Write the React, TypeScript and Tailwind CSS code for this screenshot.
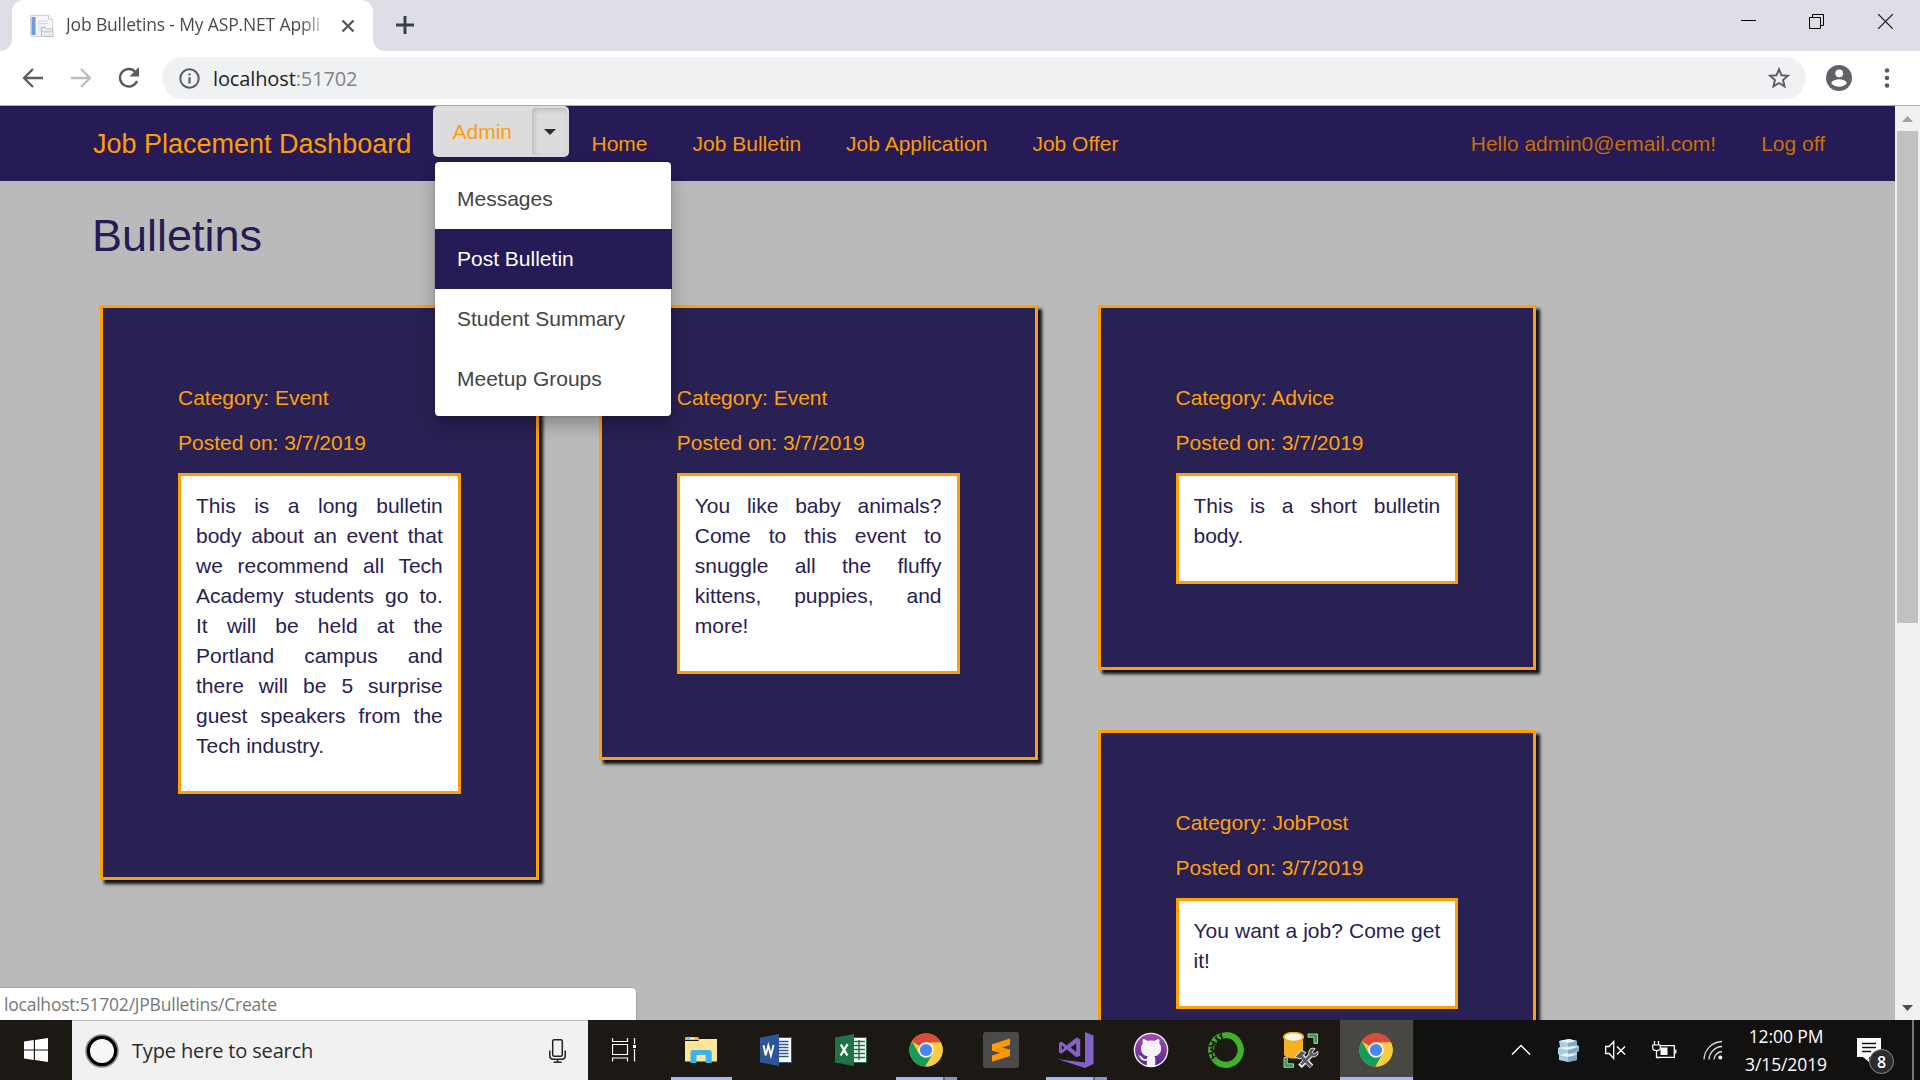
import type { ReactNode } from "react";

const UI = "font-['Open_Sans',sans-serif]";

function Favicon() {
  return (
    <svg width="24" height="24" viewBox="0 0 24 24">
      <path d="M0.5 1.5h18l4 4v17h-22z" fill="#f4f5f8" stroke="#cfd2da" />
      <path d="M18.5 1.5l4 4h-4z" fill="#fff" stroke="#c4c6cc" strokeWidth="0.8" />
      <rect x="1.5" y="3" width="4" height="18" fill="#6d9be3" />
      <path d="M8 7h10M8 9.5h10M8 12h3M8 14.5h3M8 17h3" stroke="#d3d7e2" />
      <path d="M11.5 22.5v-9h4l1 1.500h6.500v7.500z" fill="#eceef2" stroke="#b9bcc5" />
      <path d="M12 17.500h11" stroke="#cdd0d8" />
      <rect x="14.500" y="18.500" width="5" height="2" fill="#fff" stroke="#c3c6ce" strokeWidth="0.600" />
    </svg>
  );
}

function ChromeLogo() {
  return (
    <svg width="34" height="34" viewBox="0 0 34 34">
      <circle cx="17" cy="17" r="16.600" fill="#fcc934" />
      <path d="M17 17L2.900 8.200A16.600 16.600 0 0 1 32 9.500H17z" fill="#db4a3e" />
      <path d="M2.900 8.200A16.600 16.600 0 0 0 16.500 33.600L23.500 21 17 17 9.800 20.500z" fill="#149d59" />
      <path d="M32 9.500A16.600 16.600 0 0 1 16.500 33.600L23.600 21 23 9.500z" fill="#fccd43" />
      <circle cx="17" cy="17" r="7.700" fill="#f3f3f3" />
      <circle cx="17" cy="17" r="6.100" fill="#4a86f0" />
    </svg>
  );
}

function ExplorerLogo() {
  return (
    <svg width="32" height="28" viewBox="0 0 32 28">
      <path d="M0 2q0-1 1-1h12l2 3h-15z" fill="#f7b916" />
      <path d="M0 5h13l2-2h17v22.500h-32z" fill="#ffe696" />
      <path d="M2.500 2.500h7" stroke="#fff3c4" strokeWidth="1.200" />
      <path d="M2.500 2.500h2" stroke="#2d9fd8" strokeWidth="1.200" />
      <path d="M5.500 27v-10.500q0-2.500 2.500-2.500h16.500q2.200 0 2.200 2.500v10.500h-6v-8h-9.200v8z" fill="#3db4e7" />
    </svg>
  );
}

function WordLogo() {
  return (
    <svg width="32" height="32" viewBox="0 0 32 32">
      <rect x="18" y="3.500" width="13.500" height="25" fill="#fff" stroke="#2b579a" />
      <path d="M19 7.500h9.500M19 10.500h9.500M19 13.500h9.500M19 16.500h9.500M19 19.500h9.500M19 22.500h9.500" stroke="#2b579a" strokeWidth="1.500" />
      <path d="M0 3.500L19 0v32L0 28.500z" fill="#2b579a" />
      <path d="M3.500 11.200l2.200 10 2.600-9.800 2.600 10 2.700-10.400" fill="none" stroke="#fff" strokeWidth="1.900" />
    </svg>
  );
}

function ExcelLogo() {
  return (
    <svg width="32" height="32" viewBox="0 0 32 32">
      <rect x="18" y="3.500" width="13.500" height="25" fill="#fff" stroke="#217346" />
      <path d="M19 7.500h11M19 11.500h11M19 15.500h11M19 19.500h11M19 23.500h11M24 6v20" stroke="#217346" strokeWidth="1.500" />
      <path d="M0 3.500L19 0v32L0 28.500z" fill="#217346" />
      <path d="M5.800 10.500l6.600 11M12.600 10.200l-7 11.300" fill="none" stroke="#fff" strokeWidth="2.300" />
    </svg>
  );
}

function SublimeLogo() {
  return (
    <svg width="36" height="36" viewBox="0 0 36 36">
      <rect width="36" height="36" rx="2.500" fill="#4a4a4a" />
      <path d="M27 6.500L9 12.200v6.300l18-5.600z" fill="#ff9800" />
      <path d="M9 12.200v6.300l18 5.500v-6.300z" fill="#ffa10a" />
      <path d="M9 18.500l9 2.800 9-3.600-9-2.700z" fill="#e08400" opacity="0.500" />
      <path d="M27 17.700v6.200L9 29.800v-6.300z" fill="#ff9800" />
    </svg>
  );
}

function VisualStudioLogo() {
  return (
    <svg width="36" height="36" viewBox="0 0 36 36">
      <path d="M27 0l8.500 3.500v28.500L27 36 0 27.200l27 3.300z" fill="#8661c5" />
      <path d="M1 11l2.500-1.400 5 4L18.500 5.500l3.700 1.800v16.500l-3.700 1.500-9.800-7.700-5.200 4.200L1 20.500zM3.800 13.200v5l2.500-2.500zM18.200 11.600l-5.500 4 5.500 4.200z" fill="#8661c5" fillRule="evenodd" />
    </svg>
  );
}

function GitHubLogo() {
  return (
    <svg width="36" height="36" viewBox="0 0 36 36">
      <defs>
        <linearGradient id="gh" x1="0" y1="0" x2="0" y2="1">
          <stop offset="0" stopColor="#a84bb8" />
          <stop offset="1" stopColor="#4d2a86" />
        </linearGradient>
      </defs>
      <circle cx="18" cy="18" r="16.600" fill="url(#gh)" stroke="#f2eef5" strokeWidth="1.400" />
      <path d="M13.800 34v-5.500c-4 .8-6-1-7-3-.4-.8-.9-1.200-1.600-1.700 2-.7 3.300.4 4.400 2 1 1.400 2.400 1.500 4.200.9.100-1 .6-1.900 1.200-2.400-4.500-.7-7-3-7-8 0-2 .7-3.500 1.800-4.700-.4-1.600-.3-3.300.3-4.600 1.700 0 3.300 1 4.500 2 2.200-.6 4.700-.6 6.900 0 1.200-1 2.800-2 4.500-2 .6 1.300.7 3 .3 4.600 1.100 1.200 1.800 2.700 1.800 4.700 0 5-2.500 7.300-7 8 .8.700 1.200 1.800 1.200 3.200V34z" fill="#f5f3f7" />
    </svg>
  );
}

function AnacondaLogo() {
  return (
    <svg width="36" height="36" viewBox="0 0 36 36">
      <path d="M18 3.200A14.800 14.800 0 1 1 7 28" fill="none" stroke="#43b02a" strokeWidth="6.200" />
      <path d="M7 28A14.800 14.800 0 0 1 18 3.200" fill="none" stroke="#43b02a" strokeWidth="6" />
      <path
        d="M1 14l6-1M3 9l6 3M8 4l2 6M13 1l1 6M2 17l6 3M0 22l8-3M3 27l6-4M5 12l-1 7M4 20l1 7M7 6l5 2M11 3l4 3M6 9l-2 5"
        fill="none"
        stroke="#1b1815"
        strokeWidth="1.500"
      />
    </svg>
  );
}

function DatabaseToolLogo() {
  return (
    <svg width="36" height="36" viewBox="0 0 36 36">
      <path d="M1 4.500v17.500c0 6 19 6 19 0V4.500z" fill="#f4b223" />
      <ellipse cx="10.500" cy="5" rx="9.800" ry="4.500" fill="#f3f3f1" stroke="#f0a81c" strokeWidth="1.600" />
      <path d="M25 2h9.500v9.500h-3.500V5.200H25zM1 25.500h3.300v6.300h6.200v3.500H1z" fill="#3d9344" stroke="#b9dbb9" strokeWidth="0.900" />
      <path d="M17 34.500l10.500-11M15.500 20.500l13 14" stroke="#e8e8e8" strokeWidth="5" />
      <path d="M12 25l6-6.500 5 2-6 6.500z" fill="#555b60" stroke="#e8e8e8" strokeWidth="1" />
      <path d="M28 16.500a5 5 0 0 1 4.200.3l-3 3.200 2 2 3.500-2.800c1.200 4-2.500 6.800-5.700 5.300L19 34l-2.500-2.200 9.500-9.300c-.8-2.500.3-5 2-6z" fill="#555b60" stroke="#e8e8e8" strokeWidth="1" />
      <path d="M17 23l11 11.500" stroke="#555b60" strokeWidth="3" />
    </svg>
  );
}

type Marker = "none" | "full" | "multi";

function TaskSlot({ children, marker = "none", active = false }: { children: ReactNode; marker?: Marker; active?: boolean }) {
  return (
    <div className={"mx-px flex h-full w-[73px] flex-col items-center " + (active ? "bg-[#484744]" : "")}>
      <div className="flex h-[57px] w-full items-center justify-center pt-[3px] pr-px">{children}</div>
      {marker === "full" && <div className={"h-[3px] bg-[#a9b8f4] " + (active ? "w-full" : "w-[61px]")} />}
      {marker === "multi" && (
        <div className="flex h-[3px] w-[61px]">
          <div className="w-[47px] bg-[#a9b8f4]" />
          <div className="w-[2px] bg-[#5d6584]" />
          <div className="flex-1 bg-[#8794c4]" />
        </div>
      )}
    </div>
  );
}

function BrowserChrome() {
  return (
    <header className={UI}>
      <div className="flex h-[51px] bg-[#dedee6]">
        <div className="flex w-3 bg-white">
          <div className="w-full rounded-br-[12px] bg-[#dedee6]" />
        </div>
        <div className="bg-[#dedee6]">
          <div className="flex h-[51px] w-[361px] items-center rounded-t-[12px] bg-white pl-[18px]">
            <Favicon />
            <div className="ml-3 w-[266px] bg-linear-to-r from-[#45474b] from-88% to-transparent bg-clip-text pb-[2px] text-[17.500px] tracking-[-0.150px] whitespace-nowrap text-transparent">
              Job Bulletins - My ASP.NET Appli
            </div>
            <svg className="ml-[9px]" width="14" height="14" viewBox="0 0 14 14">
              <path d="M1.500 1.500l11 11M12.500 1.500l-11 11" stroke="#55585d" strokeWidth="2.300" />
            </svg>
          </div>
        </div>
        <div className="flex w-3 bg-white">
          <div className="w-full rounded-bl-[12px] bg-[#dedee6]" />
        </div>
        <svg className="mt-4 ml-[11px]" width="18" height="18" viewBox="0 0 18 18">
          <path d="M9 0v18M0 9h18" stroke="#3c4043" strokeWidth="3" />
        </svg>
        <div className="ml-auto flex pt-[14px] pr-[27px]">
          <svg width="15" height="15" viewBox="0 0 15 15">
            <path d="M0 6.500h15" stroke="#000" />
          </svg>
          <svg className="ml-[53px]" width="15" height="15" viewBox="0 0 15 15">
            <path d="M0.500 3.500h11v11h-11zM3.500 3.500v-3h11v11h-3" fill="none" stroke="#000" />
          </svg>
          <svg className="ml-[54px]" width="15" height="15" viewBox="0 0 15 15">
            <path d="M0 0l15 15M15 0L0 15" stroke="#111" strokeWidth="1.200" />
          </svg>
        </div>
      </div>
      <div className="flex h-[54px] items-center bg-white pl-[22px]">
        <svg width="22" height="20" viewBox="0 0 22 20">
          <path d="M21 10H3M11 1L2 10l9 9" fill="none" stroke="#5a5d62" strokeWidth="2.300" />
        </svg>
        <svg className="ml-[26px]" width="22" height="20" viewBox="0 0 22 20">
          <path d="M1 10h18M11 1l9 9-9 9" fill="none" stroke="#babcbe" strokeWidth="2.300" />
        </svg>
        <svg className="ml-[25px]" width="24" height="22" viewBox="0 0 24 22">
          <path d="M18.500 5A8.800 8.800 0 1 0 20 14" fill="none" stroke="#5a5d62" strokeWidth="2.400" />
          <path d="M22 0v9.500h-9.500z" fill="#5a5d62" />
        </svg>
        <div className="ml-[21px] flex h-[42px] w-[1644px] items-center rounded-full bg-[#f0f1f3] pl-[17px]">
          <svg width="21" height="21" viewBox="0 0 21 21">
            <circle cx="10.500" cy="10.500" r="9.200" fill="none" stroke="#5a5d62" strokeWidth="2" />
            <path d="M10.500 9.300v6.200M10.500 5.500v2" stroke="#5a5d62" strokeWidth="2.200" />
          </svg>
          <div className="ml-[13px] pt-[2px] text-[20px] tracking-[-0.120px] text-[#808489]">
            <span className="text-[#1c1e22]">localhost</span>:51702
          </div>
          <svg className="mr-4 ml-auto" width="22" height="22" viewBox="0 0 22 22">
            <path d="M11 2.300l2.500 6 6.500.5-5 4.200 1.600 6.400L11 16l-5.600 3.400L7 13 2 8.800l6.500-.5z" fill="none" stroke="#5a5d62" strokeWidth="1.900" />
          </svg>
        </div>
        <svg className="ml-5" width="26" height="26" viewBox="0 0 26 26">
          <circle cx="13" cy="13" r="13" fill="#5f6269" />
          <circle cx="13.200" cy="8.300" r="3.900" fill="#fff" />
          <path d="M5.200 18c2.500-5 13.200-5 15.700 0-3.500 5-12.200 5-15.700 0z" fill="#fff" />
        </svg>
        <svg className="ml-[32px]" width="6" height="20" viewBox="0 0 6 20">
          <circle cx="3" cy="2.500" r="2.300" fill="#5a5d62" />
          <circle cx="3" cy="10" r="2.300" fill="#5a5d62" />
          <circle cx="3" cy="17.500" r="2.300" fill="#5a5d62" />
        </svg>
      </div>
      <div className="h-px bg-[#acacac]" />
    </header>
  );
}

function AdminDropdown() {
  const items = ["Messages", "Post Bulletin", "Student Summary", "Meetup Groups"];
  return (
    <div className="relative ml-[21px] h-[51px] w-[136px]">
      <div className="flex h-[51px] overflow-hidden rounded-[5px] bg-[#dcdcdc]">
        <div className="w-[99px] pl-[19.500px] text-[21px] leading-[51px] text-[#ff9e0b]">Admin</div>
        <div className="mt-[2px] mb-[2px] flex w-[35px] items-center justify-center rounded-[4px] shadow-[inset_2px_2px_5px_rgba(0,0,0,0.160)]">
          <svg width="12" height="6" viewBox="0 0 12 6">
            <path d="M0 0h12L6 6z" fill="#2e2e2e" />
          </svg>
        </div>
      </div>
      <ul className="absolute top-[56px] left-[2px] z-10 h-[254px] w-[236px] rounded-[4px] bg-white py-[7px] shadow-[0_0_2px_rgba(0,0,0,0.300),0_9px_18px_rgba(0,0,0,0.260)]">
        {items.map((item) => (
          <li
            key={item}
            className={
              "flex h-[60px] items-center pl-[22px] text-[21px] " +
              (item === "Post Bulletin" ? "w-[237px] bg-[#261a57] text-white" : "text-[#444]")
            }
          >
            {item}
          </li>
        ))}
      </ul>
    </div>
  );
}

function NavBar() {
  return (
    <nav className="flex h-[75px] bg-[#261a57] pl-[93px] text-[21px] leading-[76px]">
      <a className="w-[319px] text-[27px] whitespace-nowrap text-[#ff9e00]">Job Placement Dashboard</a>
      <AdminDropdown />
      <div className="flex gap-[45px] pl-[22.500px] text-[#fa9a05]">
        <a>Home</a>
        <a>Job Bulletin</a>
        <a>Job Application</a>
        <a>Job Offer</a>
      </div>
      <div className="ml-auto flex gap-[45px] pr-[70px] text-[#c47103]">
        <a>Hello admin0@email.com!</a>
        <a>Log off</a>
      </div>
    </nav>
  );
}

function BulletinCard({ category, body }: { category: string; body: string }) {
  return (
    <article className="w-[438.750px] border-[3px] border-[#ffa200] bg-[#292053] px-[75px] pt-[75px] pb-[83px] text-[21px] leading-[30px] text-[#ffa10d] shadow-[4px_4px_3px_#111]">
      <p className="mb-[15px]">Category: {category}</p>
      <p className="mb-[15px]">Posted on: 3/7/2019</p>
      <div className="border-[3px] border-[#ffa200] bg-white p-[15px] pb-[30px] text-justify text-[#292053]">{body}</div>
    </article>
  );
}

function Page() {
  return (
    <div className="relative flex h-[914px] overflow-hidden bg-[#bababa] font-['Liberation_Sans',Arial,sans-serif]">
      <div className="h-full w-[1895px]">
        <NavBar />
        <h1 className="pt-[30px] pl-[92px] text-[45px] leading-[50px] text-[#261a57]">Bulletins</h1>
        <main className="flex items-start gap-[60px] pt-[44px] pl-[100px]">
          <BulletinCard
            category="Event"
            body="This is a long bulletin body about an event that we recommend all Tech Academy students go to. It will be held at the Portland campus and there will be 5 surprise guest speakers from the Tech industry."
          />
          <BulletinCard
            category="Event"
            body="You like baby animals? Come to this event to snuggle all the fluffy kittens, puppies, and more!"
          />
          <div className="flex flex-col gap-[60px]">
            <BulletinCard category="Advice" body="This is a short bulletin body." />
            <BulletinCard category="JobPost" body="You want a job? Come get it!" />
          </div>
        </main>
      </div>
      <div className="flex w-[25px] flex-col items-center bg-[#f1f1f1]">
        <svg className="mt-[10px]" width="11" height="6" viewBox="0 0 11 6">
          <path d="M0 6L5.500 0 11 6z" fill="#a0a0a0" />
        </svg>
        <div className="mt-[9px] h-[492px] w-[21px] bg-[#c1c1c1]" />
        <svg className="mt-auto mb-[9px]" width="11" height="6" viewBox="0 0 11 6">
          <path d="M0 0h11L5.500 6z" fill="#505050" />
        </svg>
      </div>
      <div
        className={
          "absolute bottom-0 left-0 h-[33px] w-[637px] rounded-tr-[5px] border-t border-r border-[#a5a5a5] bg-white pl-1 text-[17.500px] leading-[33px] tracking-[-0.220px] text-[#777] " +
          UI
        }
      >
        localhost:51702/JPBulletins/Create
      </div>
    </div>
  );
}

function Taskbar() {
  return (
    <footer className={"flex h-[60px] bg-[#1c1915] " + UI}>
      <div className="flex w-[72px] items-center justify-center">
        <svg width="24" height="24" viewBox="0 0 24 24">
          <path d="M0 3.500l9.800-1.400v9.400H0zM11 1.900L24 0v11.500H11zM0 12.600h9.800V22L0 20.600zM11 12.600h13V24l-13-1.900z" fill="#fff" />
        </svg>
      </div>
      <div className="flex w-[516px] items-center border-t border-[#bdbdbd] bg-[#f1f1f1] pl-[13px]">
        <svg width="34" height="34" viewBox="0 0 34 34">
          <circle cx="17" cy="17" r="15.300" fill="none" stroke="#8a8a8a" strokeWidth="3" />
          <circle cx="17" cy="17" r="13.600" fill="#f6f6f6" stroke="#000" strokeWidth="3.200" />
        </svg>
        <span className="ml-[13px] pt-[1px] text-[20px] tracking-[-0.150px] text-[#2b2b2b]">Type here to search</span>
        <svg className="mr-[22px] ml-auto" width="17" height="24" viewBox="0 0 17 24">
          <rect x="3.700" y="0.800" width="9.600" height="16.400" rx="1.500" fill="none" stroke="#222" strokeWidth="1.500" />
          <path d="M0.800 11.500v5.500q0 3.200 3.500 3.200h8.400q3.500 0 3.500-3.200v-5.500M8.500 20v3M4.500 23.200h8" fill="none" stroke="#222" strokeWidth="1.500" />
        </svg>
      </div>
      <div className="flex w-[76px] items-center pl-6">
        <svg width="25" height="24" viewBox="0 0 25 24">
          <path d="M0.500 0v3.500h15V0M0.500 6.500h15v10h-15zM0.500 23.500v-3.500h15v3.500M22.500 0v6M22.500 11v12.500" fill="none" stroke="#fff" strokeWidth="1.200" />
          <rect x="21" y="7" width="3" height="3" fill="#fff" />
        </svg>
      </div>
      <TaskSlot marker="full"><ExplorerLogo /></TaskSlot>
      <TaskSlot><WordLogo /></TaskSlot>
      <TaskSlot><ExcelLogo /></TaskSlot>
      <TaskSlot marker="multi"><ChromeLogo /></TaskSlot>
      <TaskSlot><SublimeLogo /></TaskSlot>
      <TaskSlot marker="multi"><VisualStudioLogo /></TaskSlot>
      <TaskSlot><GitHubLogo /></TaskSlot>
      <TaskSlot><AnacondaLogo /></TaskSlot>
      <TaskSlot><DatabaseToolLogo /></TaskSlot>
      <TaskSlot marker="full" active><ChromeLogo /></TaskSlot>
      <div className="flex flex-1 items-center bg-[#12110f] pl-[97px] text-white">
        <svg width="20" height="12" viewBox="0 0 20 12">
          <path d="M1 10.500L10 1.500l9 9" fill="none" stroke="#fff" strokeWidth="1.500" />
        </svg>
        <svg className="ml-[26px]" width="23" height="23" viewBox="0 0 23 23">
          <path d="M2 2l10-2 8 2v4l2 1v5l-2 1v8l-9 2-9-2v-5l-1-1V9l2-1z" fill="#a9cde0" />
          <path d="M2 2l10-2 8 2-9 2zM1 9l10 2 11-3-8-1zM2 16l9 2 9-2-9-2z" fill="#e6f2f8" />
          <path d="M11 4v4l9-2V2zM11 11v4l11-3V8zM11 18v5l9-2v-5z" fill="#7fa9c4" />
        </svg>
        <svg className="ml-[25px]" width="21" height="20" viewBox="0 0 21 20">
          <path d="M0.700 6.500h3.500l4.500-5v17l-4.500-5H0.700z" fill="none" stroke="#fff" strokeWidth="1.300" />
          <path d="M12 6.500l8 8M20 6.500l-8 8" stroke="#fff" strokeWidth="1.400" />
        </svg>
        <svg className="ml-[26px]" width="25" height="18" viewBox="0 0 25 18">
          <path d="M8 4.700h14.300v11.600H6.500M23.800 8.500v4" fill="none" stroke="#fff" strokeWidth="1.300" />
          <rect x="8.500" y="6.500" width="7" height="7.500" fill="#fff" />
          <path d="M2.500 0v4M6.500 0v4M4.500 9v7.500h3" stroke="#fff" strokeWidth="1.300" fill="none" />
          <path d="M0.700 4h7.600v3q0 2.500-3.800 2.500T0.700 7z" fill="#12110f" stroke="#fff" strokeWidth="1.200" />
        </svg>
        <svg className="ml-[26px]" width="20" height="20" viewBox="0 0 20 20">
          <path d="M1 19.500A18.500 18.500 0 0 1 19 1.500M6 19.500A13.500 13.500 0 0 1 19 6.500M11 19.500A8.500 8.500 0 0 1 19 11.500" fill="none" stroke="#ddd" strokeWidth="1.300" />
          <circle cx="17.300" cy="17.500" r="2" fill="#fff" />
        </svg>
        <div className="ml-[14px] w-[98px] text-center text-[17.500px] leading-[28px] tracking-[-0.100px] whitespace-nowrap">
          12:00 PM
          <br />
          3/15/2019
        </div>
        <div className="relative ml-[22px] h-6 w-6">
          <svg width="24" height="24" viewBox="0 0 24 24">
            <path d="M0 0h24v19H12v5l-6-5H0z" fill="#fff" />
            <path d="M5 5.500h14M5 9.500h14M5 13.500h9" stroke="#12110f" strokeWidth="1.300" />
          </svg>
          <div className="absolute top-[11px] left-[12px] flex h-[25px] w-[25px] items-center justify-center rounded-full border border-[#8b8b8b] bg-[#2d2c2b] text-[16px] font-semibold">
            8
          </div>
        </div>
        <div className="mr-[6px] ml-auto h-full w-[2px] bg-[#777]" />
      </div>
    </footer>
  );
}

export default function App() {
  return (
    <div className="flex h-[1080px] w-[1920px] flex-col overflow-hidden bg-white">
      <BrowserChrome />
      <Page />
      <Taskbar />
    </div>
  );
}
